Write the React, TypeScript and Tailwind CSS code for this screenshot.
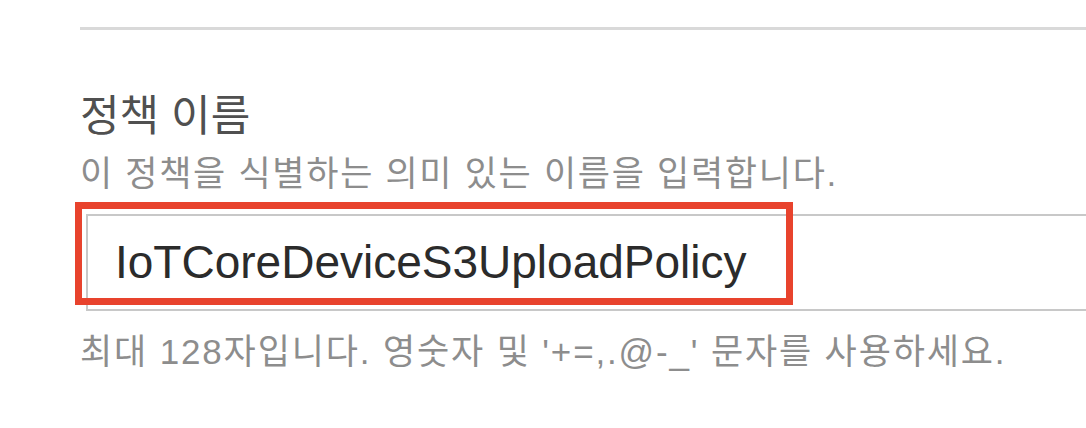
export default function App() {
  return (
    <div
      className="h-[428px] w-[1086px] overflow-hidden bg-white pl-[80px] pt-[27px]"
      style={{ fontFamily: '"Liberation Sans", "Noto Sans CJK KR", sans-serif' }}
    >
      <div className="h-[3px] bg-[#d9d9d9]" />

      <div className="mt-[63px] text-[43px] leading-[46px] text-[#505050]">정책 이름</div>
      <div className="mt-[15px] text-[35px] leading-[40px] tracking-[1.7px] text-[#8d8d8d]">
        이 정책을 식별하는 의미 있는 이름을 입력합니다.
      </div>

      <div className="relative ml-[6px] mt-[20px]">
        <div className="flex h-[97px] w-[1040px] items-center border-2 border-[#c8c8c8] pl-[27px] text-[46px] text-[#2b2b2b]">
          IoTCoreDeviceS3UploadPolicy
        </div>
        {/* annotation box */}
        <div className="absolute left-[-11px] top-[-12px] h-[103px] w-[718px] border-[7px] border-[#e8432d]" />
      </div>

      <div className="mt-[21px] text-[35px] leading-[40px] tracking-[1.85px] text-[#8d8d8d]">
        최대 128자입니다. 영숫자 및 '+=,.@-_' 문자를 사용하세요.
      </div>
    </div>
  );
}
